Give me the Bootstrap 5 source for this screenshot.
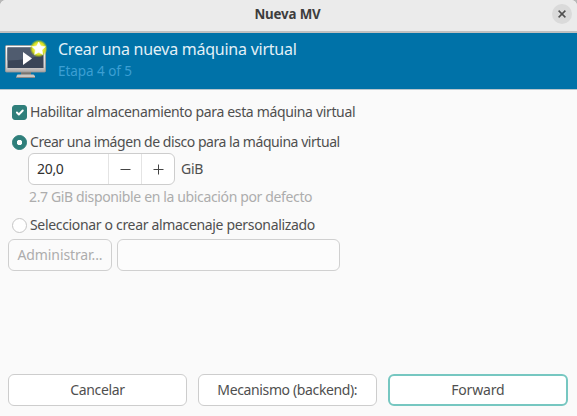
<!DOCTYPE html>
<html lang="es">
<head>
<meta charset="utf-8">
<meta name="viewport" content="width=device-width, initial-scale=1">
<title>Nueva MV</title>
<link href="https://cdn.jsdelivr.net/npm/bootstrap@5.3.0/dist/css/bootstrap.min.css" rel="stylesheet">
<style>
html, body { height: 100%; overflow: hidden; }
body { font-family: "Noto Sans", "Open Sans", sans-serif; font-size: 14px; line-height: 20px; color: #4f4f4f; background: #b8b8b8; }
.window { height: 416px; background: #fafafa; border-radius: 6px 6px 0 0; overflow: hidden; }
.titlebar { height: 33px; background: #ebebeb; border-bottom: 2px solid #c0c0c0; padding: 0 5px 3px 3px; }
.titlebar .spacer { width: 20px; }
.title-text { font-size: 13.3px; font-weight: 700; color: #3d3d3d; letter-spacing: -.15px; }
.close-btn { width: 20px; height: 20px; border-radius: 50%; background: #dadada; }
.banner { height: 57px; background: #0072a8; border-bottom: 1px solid #b9c6cd; padding-left: 5px; }
.banner-icon { margin-top: 6px; }
.banner-copy { margin-left: 10px; padding-top: 5px; }
.banner-title { font-size: 16px; line-height: 22px; color: #e3f0f7; letter-spacing: -.25px; }
.banner-step { font-size: 13.5px; line-height: 22px; color: #3c9fd3; letter-spacing: -.05px; }
.form-area { padding-top: 12px; }
.opt { height: 20px; padding-left: 12px; gap: 3px; white-space: nowrap; }
.opt-create { margin-top: 10px; margin-bottom: 1px; }
.opt-custom { margin-top: 8px; }
.opt .form-check-input { width: 15px; height: 15px; margin: 0; border: 1px solid #c6c6c6; background-color: #fff; flex: none; }
.opt .form-check-input:checked { background-color: #2f7f7b; border-color: #2f7f7b; }
.opt .form-check-input[type=checkbox] { border-radius: 3px; }
.opt .form-check-input[type=radio]:checked { background-image: radial-gradient(circle, #fff 0 2.4px, transparent 3px); }
.spin { width: 147px; height: 32px; margin-left: 28px; border: 1px solid #cdcdcd; border-radius: 6px; background: #fff; color: #303030; }
.spin-value { width: 80px; padding-left: 8px; letter-spacing: -.3px; }
.spin-step { width: 33px; height: 30px; padding: 0; border: 0; border-left: 1px solid #e4e4e4; border-radius: 0; }
.unit { margin-left: 6px; letter-spacing: -.3px; }
.hint { margin: 2px 0 0 29px; height: 20px; color: #adadad; white-space: nowrap; }
.btn-flat { height: 32px; border: 1px solid #cdcdcd; border-radius: 6px; background: #fff; color: #4f4f4f; font-size: 14px; line-height: 20px; padding: 0; white-space: nowrap; }
.btn-flat:disabled { background: #fbfbfb; color: #adadad; border-color: #cfcfcf; opacity: 1; }
.manage { width: 104px; letter-spacing: -.1px; }
.path-entry { width: 223px; height: 32px; margin-left: 5px; border: 1px solid #d0d0d0; border-radius: 6px; background: #fcfcfc !important; }
.actions { padding: 0 9px 10px 8px; gap: 11px; }
.actions .btn { letter-spacing: -.37px; }
.actions .btn-main { border: 2px solid #76c7c1; letter-spacing: -.15px; }
.t1 { letter-spacing: -.34px; }
.t2 { letter-spacing: -.45px; }
.t3 { letter-spacing: -.36px; }
.t4 { letter-spacing: -.33px; }
</style>
</head>
<body>
<div class="window d-flex flex-column">
  <header class="titlebar d-flex align-items-center justify-content-between">
    <span class="spacer"></span>
    <span class="title-text">Nueva MV</span>
    <button class="close-btn btn p-0 border-0 d-flex align-items-center justify-content-center" aria-label="Cerrar">
      <svg width="8" height="8" viewBox="0 0 8 8"><path d="M.6.6 7.400 7.400M7.400.6.6 7.400" stroke="#505050" stroke-width="1.500"/></svg>
    </button>
  </header>
  <div class="banner d-flex align-items-start">
    <svg class="banner-icon" width="43" height="40" viewBox="0 0 43 40">
      <defs>
        <linearGradient id="frame" x2="0" y2="1"><stop offset="0" stop-color="#fff"/><stop offset=".8" stop-color="#d5d3d2"/><stop offset="1" stop-color="#aaa6a4"/></linearGradient>
        <radialGradient id="glow"><stop offset=".35" stop-color="#f3f46a"/><stop offset=".7" stop-color="#d8e01c"/><stop offset="1" stop-color="#b5cf10" stop-opacity="0"/></radialGradient>
      </defs>
      <path d="M16 33h10v3H16z" fill="#77746f"/>
      <path d="M12.500 35.500h16l1.500 1.500v2H11.500v-2z" fill="#c9c6c3"/>
      <path d="M11.500 38h18.500v1H11.500z" fill="#8e8986"/>
      <rect x=".5" y="6.500" width="40" height="26.500" rx="1" fill="url(#frame)" stroke="#a19d9a" stroke-width=".8"/>
      <rect x="2.500" y="8.500" width="36" height="20.500" fill="#3a4557"/>
      <path d="M2.500 8.500h36v6q-14 7-36 7z" fill="#505c6f"/>
      <path d="M18 13v13l9-6.500z" fill="#fff"/>
      <circle cx="33.700" cy="9.500" r="9" fill="url(#glow)"/>
      <path d="m33.700 3 2 4.100 4.600.6-3.400 3.200.9 4.600-4.100-2.200-4.100 2.200.9-4.600-3.400-3.200 4.600-.6z" fill="#fff" stroke="#fff" stroke-width=".6" stroke-linejoin="round"/>
    </svg>
    <div class="banner-copy">
      <div class="banner-title">Crear una nueva máquina virtual</div>
      <div class="banner-step">Etapa 4 of 5</div>
    </div>
  </div>
  <main class="form-area flex-grow-1">
    <label class="opt d-flex align-items-center"><input class="form-check-input" type="checkbox" checked><span class="t1">Habilitar almacenamiento para esta máquina virtual</span></label>
    <label class="opt opt-create d-flex align-items-center"><input class="form-check-input" type="radio" name="disk" checked><span class="t2">Crear una imágen de disco para la máquina virtual</span></label>
    <div class="d-flex align-items-center">
      <div class="spin d-flex align-items-center">
        <span class="spin-value">20,0</span>
        <button class="spin-step btn d-flex align-items-center justify-content-center" aria-label="Menos"><svg width="11" height="11"><path d="M.5 5.500h10" stroke="#444"/></svg></button>
        <button class="spin-step btn d-flex align-items-center justify-content-center" aria-label="Más"><svg width="11" height="11"><path d="M.5 5.500h10M5.500.5v10" stroke="#444"/></svg></button>
      </div>
      <span class="unit">GiB</span>
    </div>
    <div class="hint"><span class="t3">2.7 GiB disponible en la ubicación por defecto</span></div>
    <label class="opt opt-custom d-flex align-items-center"><input class="form-check-input" type="radio" name="disk"><span class="t4">Seleccionar o crear almacenaje personalizado</span></label>
    <div class="d-flex ms-2 mt-1">
      <button class="btn btn-flat manage" disabled>Administrar...</button>
      <input class="form-control path-entry" disabled aria-label="Ruta">
    </div>
  </main>
  <footer class="actions d-flex">
    <button class="btn btn-flat flex-fill w-100">Cancelar</button>
    <button class="btn btn-flat flex-fill w-100">Mecanismo (backend):</button>
    <button class="btn btn-flat btn-main flex-fill w-100">Forward</button>
  </footer>
</div>
<script src="https://cdn.jsdelivr.net/npm/bootstrap@5.3.0/dist/js/bootstrap.bundle.min.js"></script>
</body>
</html>
